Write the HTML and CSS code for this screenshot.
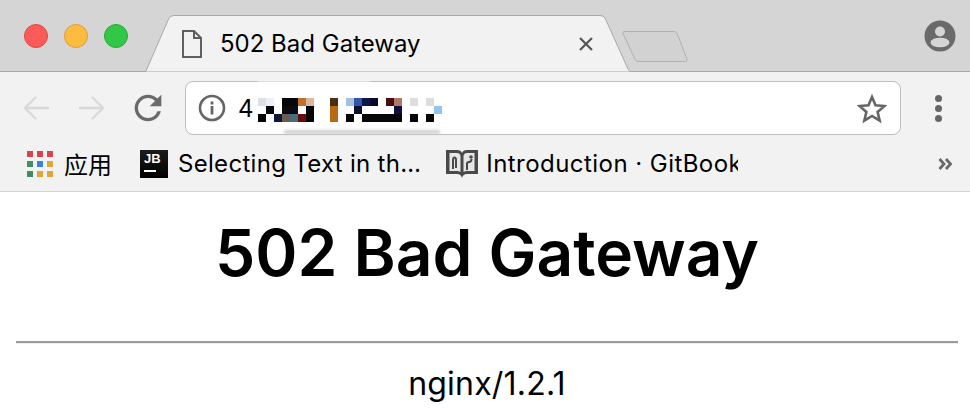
FILE: index.html
```html
<!DOCTYPE html>
<html lang="en">
<head>
    <meta charset="UTF-8">
    <title>502 Bad Gateway</title>
    <link rel="stylesheet" href="styles.css">
</head>
<body>
    <!-- Tab strip -->
    <div class="strip">
        <div class="lights">
            <span class="light light-red"></span>
            <span class="light light-yellow"></span>
            <span class="light light-green"></span>
        </div>
        <div class="tab">
            <svg class="tab-bg" width="485" height="57" viewBox="0 0 485 57">
                <path d="M0 57 L1 56 L24 3 Q25.500 0.500 29 0.500 L455 0.500 Q458.500 0.500 460 3 L483 54 Q484 56 486 57 Z" fill="#f2f2f2" stroke="#a9a9a9"/>
            </svg>
            <svg class="doc-icon" width="22" height="30" viewBox="0 0 22 30">
                <path d="M2 2 H13 L20 9 V28 H2 Z M13 2 V9 H20" fill="none" stroke="#5f5f5f" stroke-width="2"/>
            </svg>
            <span class="tab-title">502 Bad Gateway</span>
            <svg class="close-icon" width="16" height="16" viewBox="0 0 16 16">
                <path d="M2 2 L14 14 M14 2 L2 14" stroke="#555" stroke-width="2.200"/>
            </svg>
        </div>
        <svg class="new-tab" width="67" height="33" viewBox="0 0 67 33">
            <path d="M2 1.500 H52 Q54 1.500 55 3.500 L65 29 Q66 31.500 63 31.500 H16 Q14 31.500 13 29.500 L1 3.500 Q0.500 1.500 2 1.500 Z" fill="#d2d2d3" stroke="#b2b2b2"/>
        </svg>
        <svg class="avatar" width="32" height="32" viewBox="0 0 32 32">
            <circle cx="16" cy="16" r="15.500" fill="#6a6a6a"/>
            <circle cx="16" cy="11.500" r="5" fill="#d5d5d6"/>
            <ellipse cx="16" cy="22.500" rx="9.500" ry="4.800" fill="#d5d5d6"/>
        </svg>
    </div>

    <!-- Toolbar -->
    <div class="toolbar">
        <svg class="nav-icon" width="28" height="26" viewBox="0 0 28 26">
            <path d="M27 13 H3 M14 2 L3 13 L14 24" fill="none" stroke="#d9d9d9" stroke-width="2.400"/>
        </svg>
        <svg class="nav-icon" width="28" height="26" viewBox="0 0 28 26">
            <path d="M1 13 H25 M14 2 L25 13 L14 24" fill="none" stroke="#d9d9d9" stroke-width="2.400"/>
        </svg>
        <svg class="reload-icon" width="40" height="40" viewBox="0 0 24 24">
            <path d="M17.650 6.350A7.958 7.958 0 0 0 12 4c-4.420 0-7.990 3.580-7.990 8s3.570 8 7.990 8c3.730 0 6.840-2.550 7.730-6h-2.080A5.990 5.990 0 0 1 12 18c-3.310 0-6-2.690-6-6s2.690-6 6-6c1.660 0 3.140.690 4.220 1.780L13 11h7V4l-2.350 2.350z" fill="#6a6a6a"/>
        </svg>
        <div class="omnibox">
            <svg class="info-icon" width="28" height="28" viewBox="0 0 28 28">
                <circle cx="14" cy="14" r="12" fill="none" stroke="#666" stroke-width="2.600"/>
                <rect x="12.600" y="7.500" width="2.800" height="3" fill="#666"/>
                <rect x="12.600" y="12" width="2.800" height="8.500" fill="#666"/>
            </svg>
            <span class="url">4</span>
            <!-- blurred address -->
            <svg class="url-blur" width="186" height="32" viewBox="258 92 186 32">
                <g>
                    <rect x="258" y="98" width="8" height="8" fill="#dde0e4"/>
                    <rect x="266" y="98" width="8" height="8" fill="#eef0f8"/>
                    <rect x="282" y="98" width="16" height="8" fill="#060608"/>
                    <rect x="298" y="98" width="8" height="8" fill="#c0702c"/>
                    <rect x="306" y="98" width="8" height="8" fill="#d8b8a0"/>
                    <rect x="330" y="98" width="8" height="8" fill="#4a2e10"/>
                    <rect x="346" y="98" width="8" height="8" fill="#a8c0e0"/>
                    <rect x="354" y="98" width="8" height="8" fill="#3058a8"/>
                    <rect x="362" y="98" width="8" height="8" fill="#101848"/>
                    <rect x="370" y="98" width="8" height="8" fill="#0a0a30"/>
                    <rect x="386" y="98" width="8" height="8" fill="#4a0e0e"/>
                    <rect x="394" y="98" width="8" height="8" fill="#b07868"/>
                    <rect x="410" y="98" width="8" height="8" fill="#dcdcdc"/>
                    <rect x="426" y="98" width="8" height="8" fill="#dcdcdc"/>
                </g>
                <g>
                    <rect x="266" y="106" width="8" height="8" fill="#08080c"/>
                    <rect x="282" y="106" width="16" height="8" fill="#0a0a10"/>
                    <rect x="306" y="106" width="8" height="8" fill="#060608"/>
                    <rect x="330" y="106" width="8" height="8" fill="#b86a10"/>
                    <rect x="354" y="106" width="8" height="8" fill="#0a1030"/>
                    <rect x="394" y="106" width="8" height="8" fill="#101040"/>
                    <rect x="434" y="106" width="8" height="8" fill="#90c4ec"/>
                </g>
                <g>
                    <rect x="258" y="114" width="8" height="8" fill="#060608"/>
                    <rect x="274" y="114" width="8" height="8" fill="#101838"/>
                    <rect x="282" y="114" width="8" height="8" fill="#6a5a50"/>
                    <rect x="290" y="114" width="8" height="8" fill="#4a6a80"/>
                    <rect x="298" y="114" width="8" height="8" fill="#6a0a10"/>
                    <rect x="306" y="114" width="8" height="8" fill="#060608"/>
                    <rect x="330" y="114" width="8" height="8" fill="#b86a10"/>
                    <rect x="346" y="114" width="8" height="8" fill="#060608"/>
                    <rect x="362" y="114" width="40" height="8" fill="#060608"/>
                    <rect x="410" y="114" width="8" height="8" fill="#060608"/>
                    <rect x="426" y="114" width="8" height="8" fill="#060608"/>
                </g>
            </svg>
            <div class="smudge"></div>
            <div class="smudge-top"></div>
            <svg class="star-icon" width="30" height="29" viewBox="0 0 30 29">
                <path d="M15 3 L18.500 11.300 L27.500 12 L20.600 17.900 L22.700 26.700 L15 22 L7.300 26.700 L9.400 17.900 L2.500 12 L11.500 11.300 Z" fill="none" stroke="#666" stroke-width="2.600"/>
            </svg>
        </div>
        <div class="menu-dots">
            <span></span><span></span><span></span>
        </div>
    </div>

    <!-- Bookmarks -->
    <div class="bookmarks">
        <div class="bookmark bookmark-apps">
            <svg width="26" height="26" viewBox="0 0 26 26">
                <rect x="0" y="0" width="6" height="6" fill="#d9434e"/>
                <rect x="10" y="0" width="6" height="6" fill="#d9434e"/>
                <rect x="20" y="0" width="6" height="6" fill="#d9434e"/>
                <rect x="0" y="10" width="6" height="6" fill="#3f8f5f"/>
                <rect x="10" y="10" width="6" height="6" fill="#3b83dc"/>
                <rect x="20" y="10" width="6" height="6" fill="#e0a63c"/>
                <rect x="0" y="20" width="6" height="6" fill="#3f8f5f"/>
                <rect x="10" y="20" width="6" height="6" fill="#e0a63c"/>
                <rect x="20" y="20" width="6" height="6" fill="#e0a63c"/>
            </svg>
            <span class="bookmark-text">应用</span>
        </div>
        <div class="bookmark bookmark-jb">
            <div class="jb-icon"><span>JB</span><i></i></div>
            <span class="bookmark-text">Selecting Text in th…</span>
        </div>
        <div class="bookmark bookmark-book">
            <svg width="32" height="29" viewBox="0 0 32 29">
                <path d="M0 1 H11 Q15 1 16 4 Q17 1 21 1 H32 V25 H21 Q17 25 16 29 Q15 25 11 25 H0 Z" fill="#4a4a4a"/>
                <path d="M3.500 4 H11 Q14 4 14.500 7 V23 Q13 22 11 22 H3.500 Z M17.500 7 Q18 4 21 4 H28.500 V22 H21 Q19 22 17.500 23 Z" fill="#e6e6e6"/>
                <path d="M7 20 V11 Q7 8.500 8.500 8.500 Q10 8.500 10 11 V19" fill="none" stroke="#4a4a4a" stroke-width="2"/>
                <path d="M21 21 V15 Q21 13 23 13 Q25.500 13 25.500 10" fill="none" stroke="#4a4a4a" stroke-width="2"/>
                <circle cx="25" cy="8" r="1.800" fill="#4a4a4a"/>
            </svg>
            <span class="bookmark-text bookmark-clip">Introduction · GitBook</span>
        </div>
        <svg class="more-icon" width="14" height="12" viewBox="0 0 14 12">
            <path d="M1.500 1 L6 6 L1.500 11 M8 1 L12.500 6 L8 11" fill="none" stroke="#6a6a6a" stroke-width="2.800"/>
        </svg>
    </div>

    <!-- Page -->
    <div class="page">
        <h1>502 Bad Gateway</h1>
        <hr>
        <p>nginx/1.2.1</p>
    </div>
</body>
</html>
```

FILE: styles.css
```css
html, body {
    margin: 0;
    height: 408px;
    overflow: hidden;
    background: #fff;
    font-family: Inter, "Liberation Sans", "Noto Sans CJK SC", sans-serif;
    color: #000;
}
svg {
    display: block;
    flex: none;
}

/* Tab strip */
.strip {
    display: flex;
    height: 71px;
    box-sizing: content-box;
    padding-left: 24px;
    background: #d5d5d6;
    border-bottom: 1px solid #a9a9a9;
}
.lights {
    display: flex;
    gap: 16px;
    padding-top: 24px;
}
.light {
    width: 22px;
    height: 22px;
    border-radius: 50%;
    border: 1px solid;
}
.light-red { background: #fc5b57; border-color: #df4744; }
.light-yellow { background: #fdbb40; border-color: #dea034; }
.light-green { background: #33c748; border-color: #27aa35; }

.tab {
    position: relative;
    display: flex;
    align-items: center;
    width: 483px;
    height: 57px;
    margin-top: 15px;
    margin-left: 17px;
    padding-left: 36px;
    box-sizing: border-box;
}
.tab-bg {
    position: absolute;
    top: 0;
    left: 0;
}
.doc-icon, .tab-title, .close-icon {
    position: relative;
}
.tab-title {
    margin-left: 17px;
    font-size: 24px;
    white-space: nowrap;
}
.close-icon {
    margin-left: auto;
    margin-right: 34px;
}
.new-tab {
    margin-top: 30px;
    margin-left: -6px;
}
.avatar {
    margin-top: 20px;
    margin-left: auto;
    margin-right: 14px;
}

/* Toolbar */
.toolbar {
    display: flex;
    align-items: center;
    height: 72px;
    padding: 0 28px 0 22px;
    background: #f2f2f2;
}
.nav-icon {
    margin-right: 28px;
}
.reload-icon {
    margin-left: -6px;
    margin-right: 17px;
}
.omnibox {
    position: relative;
    flex: 1;
    display: flex;
    align-items: center;
    height: 54px;
    padding: 0 13px 0 12px;
    box-sizing: border-box;
    background: #fff;
    border: 1px solid #bdbdbd;
    border-radius: 8px;
}
.url {
    margin-left: 12px;
    font-size: 24px;
}
.url-blur {
    margin-left: 4px;
}
.smudge {
    position: absolute;
    left: 98px;
    right: 460px;
    bottom: 0;
    height: 4px;
    background: #d0d0d0;
    filter: blur(1.5px);
}
.smudge-top {
    position: absolute;
    left: 72px;
    right: 530px;
    top: -1px;
    height: 2px;
    background: #fbfbfb;
    filter: blur(1px);
}
.star-icon {
    margin-left: auto;
}
.menu-dots {
    display: flex;
    flex-direction: column;
    gap: 3px;
    margin-left: 34px;
}
.menu-dots span {
    width: 7px;
    height: 7px;
    border-radius: 50%;
    background: #666;
}

/* Bookmarks */
.bookmarks {
    display: flex;
    align-items: center;
    height: 39px;
    padding: 0 18px 8px 27px;
    background: #f2f2f2;
    border-bottom: 1px solid #d4d4d4;
}
.bookmark {
    display: flex;
    align-items: center;
}
.bookmark-text {
    font-size: 24px;
    letter-spacing: 0.3px;
    white-space: nowrap;
}
.bookmark-apps .bookmark-text {
    margin-left: 11px;
    letter-spacing: 0;
}
.bookmark-jb {
    margin-left: 28px;
}
.bookmark-jb .bookmark-text {
    margin-left: 10px;
}
.bookmark-book {
    margin-left: 25px;
}
.bookmark-book .bookmark-text {
    margin-left: 8px;
}
.bookmark-clip {
    width: 252px;
    overflow: hidden;
    letter-spacing: 0.45px;
}
.jb-icon {
    display: flex;
    flex-direction: column;
    width: 28px;
    height: 28px;
    padding: 2px 4px;
    box-sizing: border-box;
    background: linear-gradient(#1c1c1c, #000);
    color: #fff;
}
.jb-icon span {
    font: bold 13px/14px "Liberation Sans", sans-serif;
}
.jb-icon i {
    width: 12px;
    height: 2px;
    margin-top: 4px;
    background: #fff;
}
.more-icon {
    margin-left: auto;
}

/* Page */
.page {
    padding: 0 12px 0 16px;
    text-align: center;
}
h1 {
    margin: 0;
    padding-top: 21px;
    font-size: 64px;
    font-weight: 600;
    line-height: 80px;
}
hr {
    height: 2px;
    margin: 48px 0 0;
    border: 0;
    border-bottom: 1px solid #eee;
    background: #9a9a9a;
    background-clip: padding-box;
}
p {
    margin: 20px 0 0;
    font-size: 32px;
    letter-spacing: 0.2px;
    line-height: 40px;
}
```
